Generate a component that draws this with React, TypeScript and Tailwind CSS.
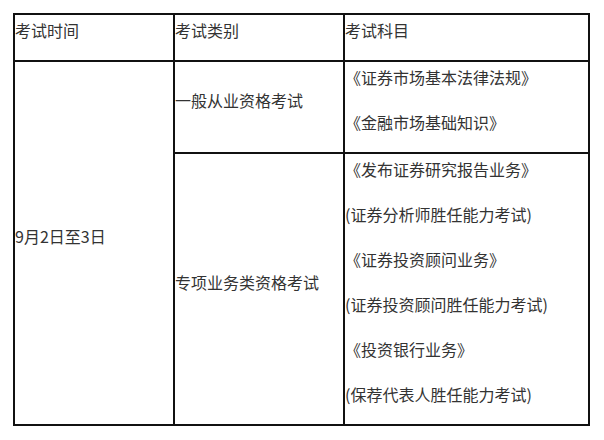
const font = { fontFamily: '"Noto Sans CJK SC", "Noto Sans", sans-serif' }

const subjectsA = ["《证券市场基本法律法规》", "《金融市场基础知识》"]
const subjectsB = [
  "《发布证券研究报告业务》",
  "(证券分析师胜任能力考试)",
  "《证券投资顾问业务》",
  "(证券投资顾问胜任能力考试)",
  "《投资银行业务》",
  "(保荐代表人胜任能力考试)",
]

const Line = ({ children }: { children: React.ReactNode }) => (
  <p className="text-[16px] leading-[30px] pb-[15px] text-[#333] whitespace-nowrap">{children}</p>
)

export default function App() {
  return (
    <div className="w-[604px] h-[440px] bg-white pt-[13px] pl-[13px]" style={font}>
      <table className="table-fixed border-collapse w-[575px]">
        <colgroup>
          <col className="w-[160px]" />
          <col className="w-[170px]" />
          <col className="w-[245px]" />
        </colgroup>
        <tbody>
          <tr>
            <td className="border-2 border-[#111] p-0 align-top">
              <Line>考试时间</Line>
            </td>
            <td className="border-2 border-[#111] p-0 align-top">
              <Line>考试类别</Line>
            </td>
            <td className="border-2 border-[#111] p-0 align-top">
              <Line>考试科目</Line>
            </td>
          </tr>
          <tr>
            <td rowSpan={2} className="border-2 border-[#111] p-0 align-middle">
              <Line>9月2日至3日</Line>
            </td>
            <td className="border-2 border-[#111] p-0 align-middle">
              <Line>一般从业资格考试</Line>
            </td>
            <td className="border-2 border-[#111] p-0 align-top">
              {subjectsA.map((s) => (
                <Line key={s}>{s}</Line>
              ))}
            </td>
          </tr>
          <tr>
            <td className="border-2 border-[#111] p-0 align-middle">
              <Line>专项业务类资格考试</Line>
            </td>
            <td className="border-2 border-[#111] p-0 align-top">
              {subjectsB.map((s) => (
                <Line key={s}>{s}</Line>
              ))}
            </td>
          </tr>
        </tbody>
      </table>
    </div>
  )
}
